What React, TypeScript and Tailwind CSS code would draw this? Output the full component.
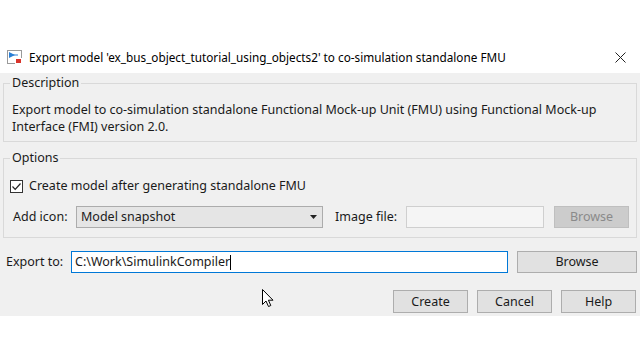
import React from "react";

function TitleIcon() {
  return (
    <svg width="16" height="16" viewBox="0 0 16 16">
      <rect x="0.5" y="1.5" width="14" height="13" fill="#fff" stroke="#9a9a9a" />
      <path d="M2 3 L2 9 L8 6 Z" fill="#2a7fd4" />
      <path d="M2 6 H11" stroke="#2a7fd4" strokeWidth="1" />
      <rect x="8.5" y="9.5" width="6" height="5" fill="#d9342b" stroke="#fff" />
    </svg>
  );
}

function Cursor() {
  return (
    <svg width="13" height="20" viewBox="0 0 13 20">
      <path
        d="M0.5 0.5 L0.5 15.5 L4 12 L6.5 17.5 L8.8 16.5 L6.4 11.2 L11 11.2 Z"
        fill="#fff"
        stroke="#000"
        strokeWidth="1"
        strokeLinejoin="miter"
      />
    </svg>
  );
}

export default function App() {
  return (
    <div
      className="w-[640px] h-[360px] bg-white text-[12.5px] leading-[16px] text-[#1a1a1a] relative overflow-hidden"
      style={{ fontFamily: '"Noto Sans", "Liberation Sans", sans-serif' }}
    >
      {/* Title bar */}
      <div className="h-[73px] flex items-end pb-[8px] pl-[7px] pr-[14px]">
        <div className="flex items-center h-[16px] w-full">
          <TitleIcon />
          <span className="ml-[6px] text-[11.75px] text-black whitespace-nowrap">
            Export model 'ex_bus_object_tutorial_using_objects2' to co-simulation standalone FMU
          </span>
          <div className="ml-auto">
            <svg width="11" height="11" viewBox="0 0 11 11">
              <path d="M0.5 0.5 L10.5 10.5 M10.5 0.5 L0.5 10.5" stroke="#222" strokeWidth="1" />
            </svg>
          </div>
        </div>
      </div>

      {/* Body */}
      <div className="bg-[#f0f0f0] h-[243px] pt-[2px] px-[3px] flex flex-col">
        <fieldset className="border border-[#d9d9d9] px-[8px] pt-[10px] pb-[6px]">
          <legend className="px-[2px] -ml-[2px] leading-[16px]">Description</legend>
          <p className="leading-[17px] whitespace-nowrap">
            Export model to co-simulation standalone Functional Mock-up Unit (FMU) using Functional Mock-up
            <br />
            Interface (FMI) version 2.0.
          </p>
        </fieldset>

        <fieldset className="mt-[8px] border border-[#d9d9d9] pl-[6px] pr-[7px] pt-[12px] pb-[9px]">
          <legend className="px-[2px] ml-[0px] leading-[16px]">Options</legend>
          <div className="flex items-center h-[16px]">
            <div className="w-[13px] h-[13px] border border-[#333] bg-white flex items-center justify-center">
              <svg width="11" height="11" viewBox="0 0 11 11">
                <path d="M1.5 5.5 L4.2 8.3 L9.5 2.5" fill="none" stroke="#222" strokeWidth="1.2" />
              </svg>
            </div>
            <span className="ml-[6px]">Create model after generating standalone FMU</span>
          </div>
          <div className="flex items-center h-[22px] mt-[12px]">
            <span className="w-[66px] pl-[3px]">Add icon:</span>
            <div className="w-[247px] h-[22px] bg-[#e5e5e5] border border-[#acacac] flex items-center pl-[4px] pr-[5px]">
              <span className="flex-1">Model snapshot</span>
              <svg width="7" height="4" viewBox="0 0 7 4">
                <path d="M0 0 H7 L3.5 4 Z" fill="#222" />
              </svg>
            </div>
            <span className="ml-[12px] w-[71px]">Image file:</span>
            <div className="w-[138px] h-[22px] bg-[#f5f5f5] border border-[#cfcfcf]" />
            <div className="ml-[10px] w-[75px] h-[22px] bg-[#cccccc] border border-[#bfbfbf] flex items-center justify-center text-[#8a8a8a]">
              Browse
            </div>
          </div>
        </fieldset>

        <div className="flex items-center h-[22px] mt-[13px] pl-[3px]">
          <span className="w-[65px]">Export to:</span>
          <div className="w-[437px] h-[22px] bg-white border border-[#0078d7] flex items-center pl-[3px]">
            <span>C:\Work\SimulinkCompiler</span>
            <span className="w-[1px] h-[15px] bg-black" />
          </div>
          <div className="ml-[9px] w-[120px] h-[22px] bg-[#e1e1e1] border border-[#adadad] flex items-center justify-center">
            Browse
          </div>
        </div>

        <div className="flex justify-end gap-[9px] mt-[17px] pr-[1px]">
          {["Create", "Cancel", "Help"].map((t) => (
            <div
              key={t}
              className="w-[75px] h-[23px] bg-[#e1e1e1] border border-[#adadad] flex items-center justify-center"
            >
              {t}
            </div>
          ))}
        </div>
      </div>

      <div className="absolute left-[262px] top-[289px]">
        <Cursor />
      </div>
    </div>
  );
}
